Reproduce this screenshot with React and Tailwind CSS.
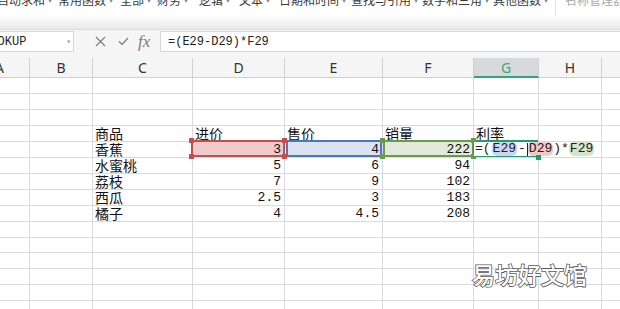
import React from "react";

const cols = [
  { name: "A", w: "w-[60px]" },
  { name: "B", w: "w-[63px]" },
  { name: "C", w: "w-[100px]" },
  { name: "D", w: "w-[92px]" },
  { name: "E", w: "w-[98px]" },
  { name: "F", w: "w-[91px]" },
  { name: "G", w: "w-[65px]" },
  { name: "H", w: "w-[63px]" },
  { name: "I", w: "w-[60px]" },
];

const tools = [
  ["自动求和", "w-[61px]"],
  ["常用函数", "w-[62px]"],
  ["全部", "w-[37px]"],
  ["财务", "w-[42px]"],
  ["逻辑", "w-[40px]"],
  ["文本", "w-[40px]"],
  ["日期和时间", "w-[72px]"],
  ["查找与引用", "w-[71px]"],
  ["数学和三角", "w-[71px]"],
  ["其他函数", "w-[62px]"],
];

// C..F values, G is handled apart
const rows = [
  { h: "h-[16px]", cells: [] },
  { h: "h-[16px]", cells: [] },
  { h: "h-[16px]", cells: [] },
  { h: "h-[16px]", cells: ["商品", "进价", "售价", "销量", "利率"], head: true },
  { h: "h-[16px]", cells: ["香蕉", "3", "4", "222"], active: true },
  { h: "h-[16px]", cells: ["水蜜桃", "5", "6", "94"] },
  { h: "h-[16px]", cells: ["荔枝", "7", "9", "102"] },
  { h: "h-[16px]", cells: ["西瓜", "2.5", "3", "183"] },
  { h: "h-[16px]", cells: ["橘子", "4", "4.5", "208"] },
  { h: "h-[16px]", cells: [] },
  { h: "h-[15px]", cells: [] },
  { h: "h-[16px]", cells: [] },
  { h: "h-[16px]", cells: [] },
  { h: "h-[16px]", cells: [] },
  { h: "h-[16px]", cells: [] },
];

const cjk = "font-['Noto_Sans_CJK_SC','Noto_Sans',sans-serif]";
const mono = "font-['Liberation_Mono','DejaVu_Sans_Mono',monospace]";

function Formula() {
  return (
    <div className={`absolute left-0 top-0 z-20 flex h-[14px] items-center whitespace-nowrap bg-white pl-[1px] pr-[6px] text-[13px] leading-[14px] text-[#222] ${mono}`}>
      <span>=(</span>
      <span className="ml-[1px] rounded-[5px] bg-[#c9d6ee] px-[1px]">E29</span>
      <span className="px-[1px]">-</span>
      <span className="h-[13px] w-px bg-[#222]" />
      <span className="rounded-[5px] bg-[#f2c8c8] px-[1px]">D29</span>
      <span>)*</span>
      <span className="rounded-[5px] bg-[#d6e4c9] px-[1px]">F29</span>
    </div>
  );
}

function Row({ row }) {
  const [c, d, e, f, g] = row.cells;
  const num = `justify-end pr-[3px] text-[13px] ${mono}`;
  const txt = `pl-[2px] text-[14px] ${cjk}`;
  const base = "relative flex shrink-0 items-end border-r border-b border-[#dadae2] leading-[15px] text-[#111]";

  return (
    <div className={`flex ${row.h}`}>
      <div className={`${base} ${cols[0].w}`} />
      <div className={`${base} ${cols[1].w}`} />
      <div className={`${base} ${cols[2].w} ${txt}`}>{c}</div>

      <div className={`${base} ${cols[3].w} ${row.head ? txt : num}`}>
        {row.active && (
          <>
            <div className="absolute -left-[2px] -top-[2px] -right-[1px] bottom-0 border-2 border-[#c0504d] bg-[#f2caca]" />
            <span className="absolute -left-[4px] -top-[4px] z-10 h-[5px] w-[5px] bg-[#c0504d]" />
            <span className="absolute -left-[4px] -bottom-[2px] z-10 h-[5px] w-[5px] bg-[#c0504d]" />
            <span className="absolute -right-[3px] -top-[4px] z-10 h-[5px] w-[5px] bg-[#c0504d]" />
            <span className="absolute -right-[3px] -bottom-[2px] z-10 h-[5px] w-[5px] bg-[#c0504d]" />
          </>
        )}
        <span className="relative">{d}</span>
      </div>

      <div className={`${base} ${cols[4].w} ${row.head ? txt : num}`}>
        {row.active && (
          <div className="absolute left-[1px] -top-[2px] right-0 bottom-0 border-2 border-[#4f74c0] bg-[#dbe3f2]" />
        )}
        <span className="relative">{e}</span>
      </div>

      <div className={`${base} ${cols[5].w} ${row.head ? txt : num}`}>
        {row.active && (
          <>
            <div className="absolute left-0 -top-[2px] -right-[1px] bottom-0 border-2 border-[#6b9a4c] bg-[#e2ebd9]" />
            <span className="absolute -left-[3px] -top-[4px] z-10 h-[5px] w-[5px] bg-[#6b9a4c]" />
            <span className="absolute -left-[3px] -bottom-[2px] z-10 h-[5px] w-[5px] bg-[#6b9a4c]" />
            <span className="absolute -right-[3px] -top-[4px] z-10 h-[5px] w-[5px] bg-[#6b9a4c]" />
            <span className="absolute -right-[3px] -bottom-[2px] z-10 h-[5px] w-[5px] bg-[#6b9a4c]" />
          </>
        )}
        <span className="relative">{f}</span>
      </div>

      <div className={`${base} ${cols[6].w} ${txt}`}>
        {row.active && (
          <>
            <div className="absolute -left-[1px] -top-[2px] right-0 bottom-0 border-2 border-[#1f9f66]" />
            <span className="absolute -right-[3px] -bottom-[3px] z-30 h-[5px] w-[5px] bg-[#1f9f66]" />
            <Formula />
          </>
        )}
        {g}
      </div>

      <div className={`${base} ${cols[7].w}`} />
      <div className={`${base} ${cols[8].w}`} />
    </div>
  );
}

export default function App() {
  return (
    <div className="relative h-[309px] w-[620px] overflow-hidden bg-white">
      {/* ribbon, only its lower edge shows */}
      <div className="flex h-[17px] overflow-hidden bg-white">
        <div className={`-ml-[3px] -mt-[8px] flex h-[25px] whitespace-nowrap text-[12px] leading-[16px] text-[#3a3a3a] ${cjk}`}>
          {tools.map(([t, w]) => (
            <div key={t} className={`flex shrink-0 ${w}`}>
              <span>{t}</span>
              <span className="ml-[3px] text-[8px] text-[#888]">▾</span>
            </div>
          ))}
          <div className="w-px bg-[#e3e3e3]" />
          <span className="pl-[9px] text-[#aaa]">名称管理器</span>
        </div>
      </div>
      <div className="h-[13px] border-b border-[#dcdcdc] bg-gradient-to-b from-[#fbfbfb] to-[#e9e9e9]" />

      {/* formula bar */}
      <div className="flex h-[28px] items-start bg-[#f5f5f5] pt-[1px]">
        <div className={`-ml-[30px] flex h-[21px] w-[104px] shrink-0 items-center justify-between border border-[#d6d6d6] bg-white pl-[5px] pr-[2px] text-[12px] text-[#222] ${mono}`}>
          <span>VLOOKUP</span>
          <span className="text-[8px] text-[#999]">▾</span>
        </div>
        <div className="flex h-[21px] w-[86px] shrink-0 items-center text-[#7a7a7a]">
          <svg className="ml-[21px]" width="11" height="11" viewBox="0 0 11 11" fill="none" stroke="#7a7a7a" strokeWidth="1.1">
            <path d="M1 1 L10 10 M10 1 L1 10" />
          </svg>
          <svg className="ml-[12px]" width="11" height="9" viewBox="0 0 11 9" fill="none" stroke="#7a7a7a" strokeWidth="1.2">
            <path d="M1 4.5 L4 7.5 L10 1" />
          </svg>
          <span className="ml-[9px] font-['Liberation_Serif',serif] text-[17px] italic leading-[20px]">fx</span>
        </div>
        <div className={`-mr-[10px] flex h-[21px] flex-1 items-center border border-[#d6d6d6] bg-white pl-[7px] text-[12px] text-[#222] ${mono}`}>
          =(E29-D29)*F29
        </div>
      </div>

      {/* column headers */}
      <div className="-ml-[30px] flex h-[20px] bg-[#f5f5f5] font-['Noto_Sans',sans-serif] text-[14px] text-[#333]">
        {cols.map((c) =>
          c.name === "G" ? (
            <div key={c.name} className={`flex shrink-0 items-center justify-center border-r border-b-2 border-r-[#d0d0d0] border-b-[#2fa772] bg-[#d7d9dc] text-[#34a877] ${c.w}`}>
              {c.name}
            </div>
          ) : (
            <div key={c.name} className={`flex shrink-0 items-center justify-center border-r border-b border-[#d0d0d0] ${c.w}`}>
              {c.name}
            </div>
          )
        )}
      </div>

      {/* grid */}
      <div className="-ml-[30px]">
        {rows.map((r, i) => (
          <Row key={i} row={r} />
        ))}
      </div>

      {/* watermark */}
      <div className={`absolute left-[472px] top-[260px] z-40 text-[23px] font-medium leading-[28px] text-white [-webkit-text-stroke:1.6px_#5a5a5a] [paint-order:stroke_fill] ${cjk}`}>
        易坊好文馆
      </div>
    </div>
  );
}
